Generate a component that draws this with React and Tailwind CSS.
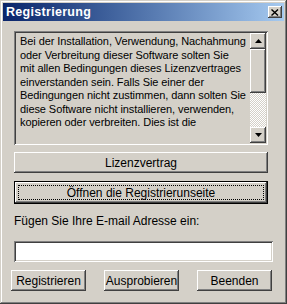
import React from "react";

const raised =
  "shadow-[inset_-1px_-1px_#404040,inset_1px_1px_#ffffff,inset_-2px_-2px_#808080,inset_2px_2px_#d4d0c8]";
const sunken =
  "shadow-[inset_1px_1px_#808080,inset_-1px_-1px_#ffffff,inset_2px_2px_#404040,inset_-2px_-2px_#d4d0c8]";

function Btn({ children, className = "" }) {
  return (
    <div
      className={`flex items-center justify-center bg-[#d4d0c8] text-black ${raised} ${className}`}
    >
      {children}
    </div>
  );
}

function ScrollBtn({ down }) {
  return (
    <div className={`w-[16px] h-[16px] flex items-center justify-center bg-[#d4d0c8] ${raised}`}>
      <svg width="7" height="4" viewBox="0 0 7 4">
        {down ? (
          <polygon points="0,0 7,0 3.5,4" fill="#000" />
        ) : (
          <polygon points="0,4 7,4 3.5,0" fill="#000" />
        )}
      </svg>
    </div>
  );
}

export default function App() {
  const lines = [
    "Bei der Installation, Verwendung, Nachahmung",
    "oder Verbreitung dieser Software solten Sie",
    "mit allen Bedingungen dieses Lizenzvertrages",
    "einverstanden sein. Falls Sie einer der",
    "Bedingungen nicht zustimmen, dann solten Sie",
    "diese Software nicht installieren, verwenden,",
    "kopieren oder verbreiten. Dies ist die",
  ];
  return (
    <div
      className="w-[287px] h-[304px] bg-[#d4d0c8] p-[3px] flex flex-col shadow-[inset_-1px_-1px_#404040,inset_1px_1px_#d4d0c8,inset_-2px_-2px_#808080,inset_2px_2px_#ffffff]"
      style={{ fontFamily: '"Liberation Sans", Arial, sans-serif' }}
    >
      <div className="h-[18px] flex items-center justify-between pl-[3px] pr-[2px] bg-linear-to-r from-[#0a246a] to-[#a6caf0]">
        <span className="text-white font-bold text-[12.5px] leading-none tracking-[0.3px]">
          Registrierung
        </span>
        <div className={`w-[14px] h-[12px] flex items-center justify-center bg-[#d4d0c8] ${raised}`}>
          <svg width="8" height="7" viewBox="0 0 8 7">
            <path d="M0.5 0.5 L7 6.5 M7 0.5 L0.5 6.5" stroke="#000" strokeWidth="1.4" />
          </svg>
        </div>
      </div>

      <div className="flex flex-col pl-[11px] pt-[10px]">
        <div className={`w-[254px] h-[114px] flex p-[2px] ${sunken}`}>
          <div className="flex-1 pl-[4px] pt-[2px] text-[11px] leading-[13.5px] tracking-[-0.08px] text-black whitespace-nowrap overflow-hidden">
            {lines.map((l, i) => (
              <div key={i}>{l}</div>
            ))}
          </div>
          <div className="w-[16px] flex flex-col">
            <ScrollBtn />
            <div className={`h-[44px] bg-[#d4d0c8] ${raised}`} />
            <div className="flex-1 bg-[repeating-conic-gradient(#ffffff_0_25%,#d4d0c8_0_50%)] bg-[length:2px_2px]" />
            <ScrollBtn down />
          </div>
        </div>

        <Btn className="w-[254px] h-[21px] mt-[7px] text-[12px]">Lizenzvertrag</Btn>

        <div className="w-[254px] h-[23px] mt-[8px] border border-black">
          <Btn className="w-full h-full p-[3px] text-[12px]">
            <div className="w-full h-full flex items-center justify-center border border-dotted border-black">
              Öffnen die Registrierunseite
            </div>
          </Btn>
        </div>

        <div className="mt-[10px] text-[12px] leading-[14px] text-black">
          Fügen Sie Ihre E-mail Adresse ein:
        </div>

        <div className={`w-[259px] h-[21px] mt-[13px] bg-white ${sunken}`} />
      </div>

      <div className="flex pl-[8px] mt-[8px] gap-[18px] text-[12px]">
        <Btn className="w-[75px] h-[21px]">Registrieren</Btn>
        <Btn className="w-[75px] h-[21px]">Ausprobieren</Btn>
        <Btn className="w-[75px] h-[21px]">Beenden</Btn>
      </div>
    </div>
  );
}
